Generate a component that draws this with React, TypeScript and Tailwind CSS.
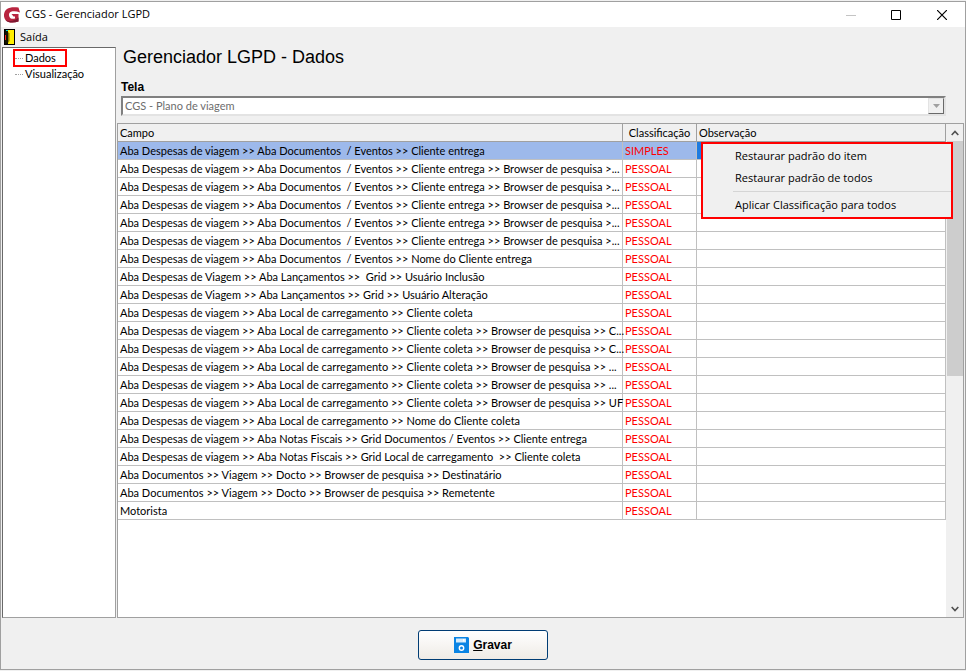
import { useState } from 'react';

interface Campo {
  nome: string;
  classificacao: string;
}

const trip = 'Aba Despesas de viagem >> ';
const docs = trip + 'Aba Documentos  / Eventos >> ';
const local = trip + 'Aba Local de carregamento >> ';

const campos: Campo[] = [
  { nome: docs + 'Cliente entrega', classificacao: 'SIMPLES' },
  { nome: docs + 'Cliente entrega >> Browser de pesquisa >...', classificacao: 'PESSOAL' },
  { nome: docs + 'Cliente entrega >> Browser de pesquisa >...', classificacao: 'PESSOAL' },
  { nome: docs + 'Cliente entrega >> Browser de pesquisa >...', classificacao: 'PESSOAL' },
  { nome: docs + 'Cliente entrega >> Browser de pesquisa >...', classificacao: 'PESSOAL' },
  { nome: docs + 'Cliente entrega >> Browser de pesquisa >...', classificacao: 'PESSOAL' },
  { nome: docs + 'Nome do Cliente entrega', classificacao: 'PESSOAL' },
  { nome: 'Aba Despesas de Viagem >> Aba Lançamentos >>  Grid >> Usuário Inclusão', classificacao: 'PESSOAL' },
  { nome: 'Aba Despesas de Viagem >> Aba Lançamentos >> Grid >> Usuário Alteração', classificacao: 'PESSOAL' },
  { nome: local + 'Cliente coleta', classificacao: 'PESSOAL' },
  { nome: local + 'Cliente coleta >> Browser de pesquisa >> C...', classificacao: 'PESSOAL' },
  { nome: local + 'Cliente coleta >> Browser de pesquisa >> C...', classificacao: 'PESSOAL' },
  { nome: local + 'Cliente coleta >> Browser de pesquisa >> ...', classificacao: 'PESSOAL' },
  { nome: local + 'Cliente coleta >> Browser de pesquisa >> ...', classificacao: 'PESSOAL' },
  { nome: local + 'Cliente coleta >> Browser de pesquisa >> UF', classificacao: 'PESSOAL' },
  { nome: local + 'Nome do Cliente coleta', classificacao: 'PESSOAL' },
  { nome: trip + 'Aba Notas Fiscais >> Grid Documentos / Eventos >> Cliente entrega', classificacao: 'PESSOAL' },
  { nome: trip + 'Aba Notas Fiscais >> Grid Local de carregamento  >> Cliente coleta', classificacao: 'PESSOAL' },
  { nome: 'Aba Documentos >> Viagem >> Docto >> Browser de pesquisa >> Destinatário', classificacao: 'PESSOAL' },
  { nome: 'Aba Documentos >> Viagem >> Docto >> Browser de pesquisa >> Remetente', classificacao: 'PESSOAL' },
  { nome: 'Motorista', classificacao: 'PESSOAL' },
];

function TitleBar() {
  return (
    <header className="flex h-[25px] shrink-0 items-center bg-white pl-[3px] font-['Open_Sans',sans-serif] text-[11px]">
      <svg width="16" height="16" viewBox="0 0 16 16" aria-hidden="true">
        <path d="M14.500 .5C10 -.2 5.500 0 3 2C-.5 4.500-1 10 1.500 13C4 16 9.500 16.300 14.500 14.500V7H7.500L9.500 9.500H11V11.500C8.500 12.300 6.300 11.800 5.500 10C4.500 7.800 5 5.500 7 4.800C9.500 4 12.500 4.200 16 5.500Z" fill="#b8243f" />
        <path d="M1.500 13C4 16 9.500 16.300 14.500 14.500V10.500C11 13.800 6 15 1.500 13Z" fill="#7c1730" />
      </svg>
      <h1 className="ml-[5px] grow">CGS - Gerenciador LGPD</h1>
      <button type="button" aria-label="Minimizar" disabled className="flex w-11 justify-center">
        <svg width="10" height="10" viewBox="0 0 10 10"><path d="M0 5.500H10" stroke="#c4c4c4" /></svg>
      </button>
      <button type="button" aria-label="Maximizar" className="flex w-[46px] justify-center">
        <svg width="10" height="10" viewBox="0 0 10 10"><path d="M.5.5H9.500V9.500H.5Z" fill="none" stroke="#000" /></svg>
      </button>
      <button type="button" aria-label="Fechar" className="flex w-[46px] justify-center">
        <svg width="10" height="10" viewBox="0 0 10 10"><path d="M0 0L10 10M10 0L0 10" stroke="#000" strokeWidth="1.200" /></svg>
      </button>
    </header>
  );
}

function ContextMenu() {
  return (
    <div
      role="menu"
      className="absolute top-0 left-1 z-10 flex w-[252px] flex-col border-2 border-[#ff0000] bg-[#f0f0f0] py-px font-['Open_Sans',sans-serif] text-[11px] leading-[22px] text-black"
    >
      <button type="button" role="menuitem" className="h-[22px] pl-8 text-left">Restaurar padrão do item</button>
      <button type="button" role="menuitem" className="h-[22px] pl-8 text-left">Restaurar padrão de todos</button>
      <hr className="my-0.5 ml-[30px] border-[#d5d5d5]" />
      <button type="button" role="menuitem" className="h-[22px] pl-8 text-left">Aplicar Classificação para todos</button>
    </div>
  );
}

function CamposTable() {
  const [selected, setSelected] = useState(0);

  return (
    <div className="flex grow border border-[#a0a0a0] bg-white">
      <div className="min-w-0 grow">
        <table className="w-full table-fixed border-separate border-spacing-0 text-[11px] leading-[17px]">
          <colgroup>
            <col />
            <col className="w-[74px]" />
            <col className="w-[249px]" />
          </colgroup>
          <thead>
            <tr className="h-[18px] bg-[#f0f0f0] text-left">
              <th className="border-r border-b border-[#a0a0a0] px-0.5 py-0 font-normal">Campo</th>
              <th className="border-r border-b border-[#a0a0a0] p-0 text-center font-normal">Classificação</th>
              <th className="border-r border-b border-[#a0a0a0] px-0.5 py-0 font-normal">Observação</th>
            </tr>
          </thead>
          <tbody>
            {campos.map((campo, i) => (
              <tr
                key={i}
                onClick={() => setSelected(i)}
                className={i === selected ? 'h-[18px] bg-[#9db9eb]' : 'h-[18px]'}
              >
                <td className="border-r border-b border-[#c0c0c0] py-0 pl-0.5 whitespace-pre">{campo.nome}</td>
                <td className="border-r border-b border-[#c0c0c0] px-0.5 py-0 text-[#ff0000]">{campo.classificacao}</td>
                <td className={i === 0 ? 'relative border-r border-b border-[#c0c0c0] bg-[#1e7be0] p-0' : 'border-r border-b border-[#c0c0c0] p-0'}>
                  {i === 0 && <ContextMenu />}
                </td>
              </tr>
            ))}
          </tbody>
        </table>
      </div>
      <div className="flex w-[17px] shrink-0 flex-col bg-[#f0f0f0]">
        <button type="button" aria-label="Rolar para cima" className="flex h-[17px] items-center justify-center">
          <svg width="8" height="6" viewBox="0 0 8 6"><path d="M.7 5L4 1.500L7.300 5" fill="none" stroke="#505050" strokeWidth="1.600" /></svg>
        </button>
        <div className="ml-px h-[235px] bg-[#cdcdcd]" />
        <button type="button" aria-label="Rolar para baixo" className="mt-auto flex h-[17px] items-center justify-center">
          <svg width="8" height="6" viewBox="0 0 8 6"><path d="M.7 1L4 4.500L7.300 1" fill="none" stroke="#505050" strokeWidth="1.600" /></svg>
        </button>
      </div>
    </div>
  );
}

export default function App() {
  return (
    <div className="flex min-h-screen flex-col bg-[#f0f0f0] pt-px pb-px font-[Lato,sans-serif] text-[11px] text-black">
      <div className="flex grow flex-col border border-[#a0a0a0]">
        <TitleBar />
        <nav className="flex h-5 shrink-0 items-center bg-[#f0f0f0] pl-[3px] font-['Open_Sans',sans-serif] text-[11px]">
          <button type="button" className="flex items-center gap-[5px]">
            <svg width="11" height="16" viewBox="0 0 11 16" aria-hidden="true">
              <path d="M0 0H11V16H0Z" fill="#000" />
              <path d="M4 1H10V15H4Z" fill="#ffee00" />
              <path d="M1 1H4V14L1 15Z" fill="#151500" />
              <path d="M4 3L5.500 4.500V12L4 14Z" fill="#8a7c00" />
              <path d="M1 6H2V11H1Z" fill="#ff2020" />
              <path d="M2 1H4V2H2Z" fill="#00d8e8" />
            </svg>
            Saída
          </button>
        </nav>
        <div className="flex grow gap-px pl-px">
          <aside className="w-[114px] shrink-0 border border-t-[#696969] border-r-[#a0a0a0] border-b-[#a0a0a0] border-l-[#696969] bg-white pt-px pl-2.5">
            <button type="button" className="flex h-[18px] w-[54px] items-center border-2 border-[#ff0000] leading-3.5">
              <span className="mr-0.5 w-2 border-t border-dotted border-[#a0a0a0]" />
              Dados
            </button>
            <button type="button" className="flex h-3.5 items-center leading-3.5">
              <span className="mr-0.5 ml-0.5 w-2 border-t border-dotted border-[#a0a0a0]" />
              Visualização
            </button>
          </aside>
          <main className="flex min-w-0 grow flex-col pr-px">
            <div className="mb-[7px] pr-[18px] pl-1">
              <h2 className="pl-0.5 font-['Liberation_Sans',Arial,sans-serif] text-[18px] leading-5">Gerenciador LGPD - Dados</h2>
              <label htmlFor="tela" className="mt-[11px] block h-[18px] font-['Liberation_Sans',Arial,sans-serif] text-xs leading-[18px] font-bold">Tela</label>
              <div className="relative">
                <select
                  id="tela"
                  disabled
                  className="block h-5 w-full appearance-none border-2 border-t-[#808080] border-r-[#e3e3e3] border-b-[#e3e3e3] border-l-[#808080] bg-white pl-0.5 text-[11px] text-[#6d6d6d] opacity-100"
                >
                  <option>CGS - Plano de viagem</option>
                </select>
                <span className="pointer-events-none absolute top-0.5 right-0.5 flex h-4 w-4 items-center justify-center border border-t-[#e3e3e3] border-r-[#696969] border-b-[#696969] border-l-[#e3e3e3] bg-[#f0f0f0]">
                  <svg width="7" height="4" viewBox="0 0 7 4"><path d="M0 0H7L3.500 4Z" fill="#a0a0a0" /></svg>
                </span>
              </div>
            </div>
            <CamposTable />
          </main>
        </div>
        <footer className="flex h-[51px] shrink-0 items-center justify-center pt-0.5">
          <button
            type="button"
            className="flex h-[30px] w-[130px] items-center justify-center gap-1 rounded-[3px] border border-[#003c74] bg-linear-to-b from-white to-[#efebe6] font-['Liberation_Sans',Arial,sans-serif] text-xs font-bold"
          >
            <svg width="15" height="16" viewBox="0 0 15 16" aria-hidden="true">
              <path d="M0 0H14L15 1V16H0Z" fill="#0a84e4" />
              <path d="M2 1.500H12V5.500H2Z" fill="#d5ebfb" />
              <path d="M9 2H10.500V4.500H9Z" fill="#fff" />
              <circle cx="7.500" cy="11" r="2.200" fill="none" stroke="#fff" strokeWidth="1.400" />
            </svg>
            <span><u>G</u>ravar</span>
          </button>
        </footer>
      </div>
    </div>
  );
}
